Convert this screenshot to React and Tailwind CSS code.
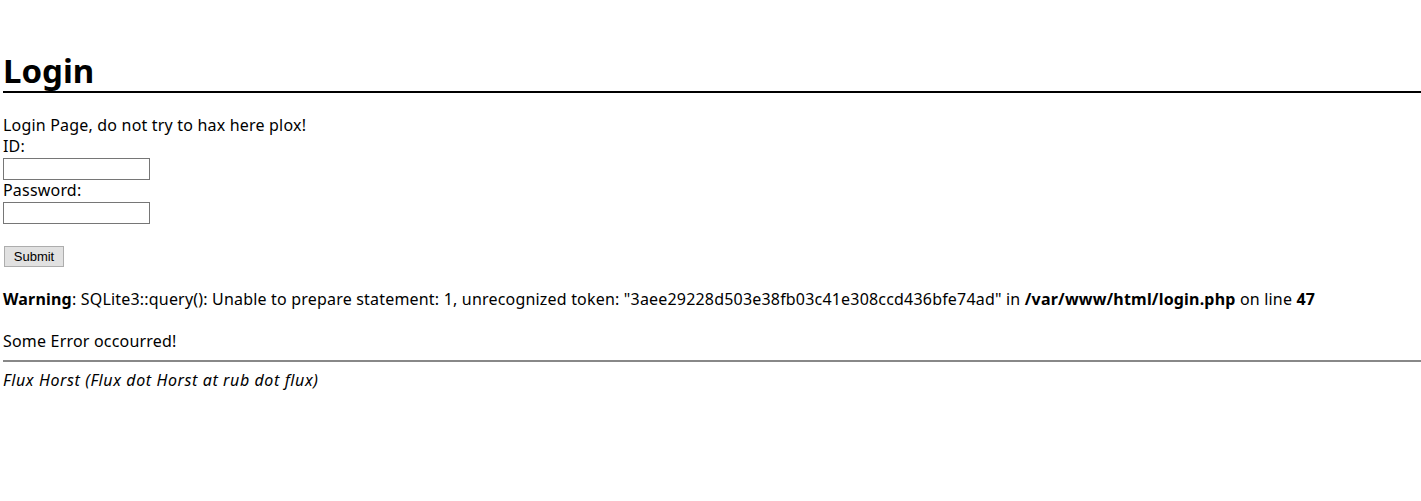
const App = () => {
    return (
        <div className="min-h-screen bg-white pt-[51px] pl-[3px] text-black font-['Noto_Sans',sans-serif] text-[16px] leading-[21px] tracking-[0.19px]">
            <h1 className="border-b-2 border-black text-[33px] leading-[40px] font-bold tracking-normal">
                Login
            </h1>

            <div className="mt-[22px]">
                <div>Login Page, do not try to hax here plox!</div>
                <div>ID:</div>
                <input type="text" className="block mt-[1px] h-[22px] w-[147px] border border-[#767676] bg-white outline-none" />
                <div>Password:</div>
                <input type="password" className="block mt-[1px] h-[22px] w-[147px] border border-[#767676] bg-white outline-none" />
                <div className="h-[21px]"></div>
                <button className="block mt-[1px] ml-[1px] h-[21px] w-[60px] border border-[#adadad] bg-[#e1e1e1] text-[13px] leading-[19px] tracking-normal font-['Liberation_Sans',sans-serif]">
                    Submit
                </button>
            </div>

            <div className="mt-[22px] whitespace-nowrap">
                <b>Warning</b>: SQLite3::query(): Unable to prepare statement: 1, unrecognized token: "3aee29228d503e38fb03c41e308ccd436bfe74ad" in <b>/var/www/html/login.php</b> on line <b>47</b>
            </div>

            <div className="mt-[21px]">Some Error occourred!</div>

            <hr className="mt-[8px] border-0 border-t-2 border-[#888888]" />

            <address className="mt-[8px] italic tracking-[0.6px]">
                Flux Horst (Flux dot Horst at rub dot flux)
            </address>
        </div>
    )
}

export default App
